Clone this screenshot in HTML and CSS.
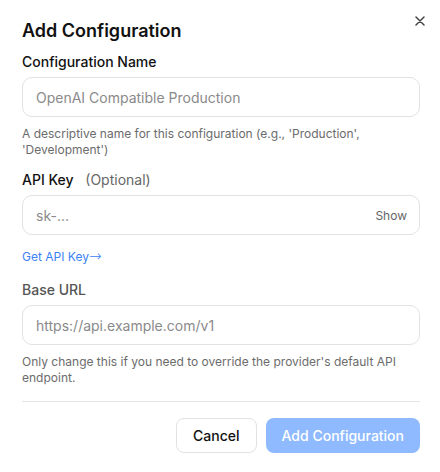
FILE: index.html
```html
<!DOCTYPE html>
<html lang="en">
<head>
<meta charset="utf-8">
<link rel="stylesheet" href="styles.css">
</head>
<body>
<div class="dialog">
  <button class="close" aria-label="Close">
    <svg width="10" height="10" viewBox="0 0 10 10"><path d="M1 1L9 9M9 1L1 9" stroke="#444" stroke-width="1.5" stroke-linecap="round"/></svg>
  </button>
  <h2 class="title">Add Configuration</h2>

  <div class="field first">
    <label class="label">Configuration Name</label>
    <div class="input"><span class="ph">OpenAI Compatible Production</span></div>
    <p class="help">A descriptive name for this configuration (e.g., 'Production', 'Development')</p>
  </div>

  <div class="field">
    <label class="label">API Key <span class="opt">(Optional)</span></label>
    <div class="input"><span class="ph">sk-...</span><span class="show">Show</span></div>
    <a class="link">Get API Key<span class="arrow">→</span></a>
  </div>

  <div class="field after-link">
    <label class="label muted">Base URL</label>
    <div class="input"><span class="ph">https://api.example.com/v1</span></div>
    <p class="help">Only change this if you need to override the provider's default API endpoint.</p>
  </div>

  <div class="footer">
    <button class="btn cancel">Cancel</button>
    <button class="btn primary">Add Configuration</button>
  </div>
</div>
</body>
</html>
```

FILE: styles.css
```css
* { box-sizing: border-box; }
html, body { margin: 0; background: #fff; }
body { font-family: Inter, "Noto Sans", sans-serif; color: #111; }
.dialog { position: relative; width: 440px; padding: 17px 20px 0 22px; }
.close { position: absolute; top: 14px; right: 13px; width: 14px; height: 14px; padding: 2px; border: 0; background: none; display: flex; }
.title { margin: 0; font-size: 18px; line-height: 28px; font-weight: 600; color: #111; }
.field { margin-top: 12px; }
.field.first { margin-top: 7px; }
.field.after-link { margin-top: 15px; }
.label { display: block; font-size: 14px; line-height: 20px; font-weight: 500; color: #111; }
.label.muted { color: #555; }
.opt { color: #666; font-weight: 400; margin-left: 8px; }
.input { margin-top: 5px; height: 40px; border: 1px solid #e2e2e2; border-radius: 10px; display: flex; align-items: center; justify-content: space-between; padding: 0 12px 0 13px; font-size: 14px; }
.ph { color: #8a8a8a; }
.show { font-size: 12px; color: #666; }
.help { margin: 9px 0 0; font-size: 12px; line-height: 16px; color: #6b6b6b; }
.link { display: inline-block; margin-top: 14px; font-size: 12px; line-height: 16px; color: #3b82f6; }
.arrow { font-family: "DejaVu Sans", sans-serif; font-size: 15px; line-height: 1; font-weight: 300; }
.footer { margin-top: 15px; border-top: 1px solid #e5e5e5; padding-top: 16px; display: flex; justify-content: flex-end; gap: 9px; }
.btn { height: 35px; border-radius: 8px; font-family: inherit; font-size: 14px; font-weight: 500; padding: 0 16px; }
.cancel { background: #fff; border: 1px solid #e2e2e2; color: #111; }
.primary { background: #8fbaff; border: 0; color: #fff; }
```
